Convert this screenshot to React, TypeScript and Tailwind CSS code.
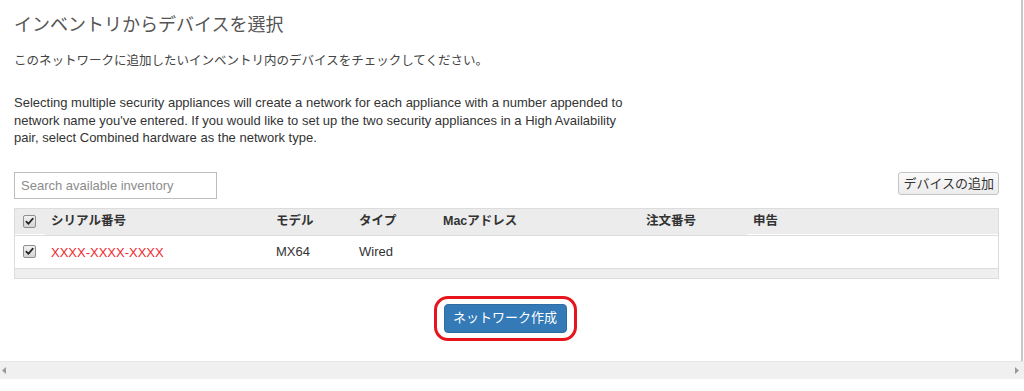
const jp = { fontFamily: '"Liberation Sans", "Noto Sans CJK JP", sans-serif' };

const Check = () => (
    <span className="inline-flex items-center justify-center w-[13px] h-[13px] rounded-[2px] border border-[#8f8f8f] bg-[linear-gradient(#f2f2f2,#d4d4d4)]">
        <svg width="9" height="9" viewBox="0 0 9 9">
            <path d="M1.3 4.6 L3.5 6.8 L7.8 1.6" stroke="#222" strokeWidth="1.7" fill="none" strokeLinecap="round" strokeLinejoin="round" />
        </svg>
    </span>
);

const cols = 'grid grid-cols-[30px_225px_83px_84px_203px_107px_1fr]';

const App = () => {
    return (
        <div className="w-[1024px] h-[391px] bg-white overflow-hidden flex flex-col" style={jp}>
            <div className="h-[361px] w-[1023px] border-r-2 border-[#c8c8c8] pl-[14px] pr-[22px] pt-[13px]">
                <h1 className="text-[18px] leading-[24px] text-[#555]">インベントリからデバイスを選択</h1>
                <p className="mt-[15px] text-[12.5px] leading-[18px] text-[#444]">
                    このネットワークに追加したいインベントリ内のデバイスをチェックしてください。
                </p>
                <p className="mt-[24px] max-w-[628px] text-[13px] leading-[17.5px] text-[#333]">
                    Selecting multiple security appliances will create a network for each appliance with a number appended to network name you've entered. If you would like to set up the two security appliances in a High Availability pair, select Combined hardware as the network type.
                </p>

                <div className="mt-[25px] flex items-start justify-between">
                    <input
                        type="text"
                        placeholder="Search available inventory"
                        className="w-[203px] h-[27px] border border-[#bdbdbd] px-[6px] text-[13px] text-[#333] placeholder:text-[#8c8c8c] outline-none"
                    />
                    <button className="h-[23px] px-[4px] rounded-[3px] border border-[#c4c4c4] bg-[linear-gradient(#fafafa,#ececec)] text-[13px] leading-[21px] text-[#333]">
                        デバイスの追加
                    </button>
                </div>

                <div className="mt-[9px] border border-[#dcdcdc] text-[12.5px] text-[#333]">
                    <div className={`${cols} h-[26px] bg-[#ececec] font-bold items-stretch`}>
                        <div className="pl-[8px] flex items-center border-b border-white"><Check /></div>
                        <div className="pl-[6px] flex items-center">シリアル番号</div>
                        <div className="pl-[6px] flex items-center">モデル</div>
                        <div className="pl-[6px] flex items-center">タイプ</div>
                        <div className="pl-[6px] flex items-center">Macアドレス</div>
                        <div className="pl-[6px] flex items-center">注文番号</div>
                        <div className="pl-[6px] flex items-center border-b border-white">申告</div>
                    </div>
                    <div className={`${cols} h-[33px] border-t border-[#dcdcdc] items-center text-[13px]`}>
                        <div className="pl-[8px] flex items-center"><Check /></div>
                        <div className="pl-[6px] pt-[2px] text-[#f0282d]">XXXX-XXXX-XXXX</div>
                        <div className="pl-[6px]">MX64</div>
                        <div className="pl-[6px]">Wired</div>
                        <div />
                        <div />
                        <div />
                    </div>
                    <div className="h-[10px] border-t border-[#dcdcdc] bg-[#efefef]" />
                </div>

                <div className="mt-[17px] flex justify-center">
                    <div className="mr-[3px] border-[3px] border-[#e8141c] rounded-[14px] px-[7px] py-[5px]">
                        <button className="w-[123px] h-[29px] rounded-[4px] bg-[#337ab7] border border-[#2e6da4] text-white text-[13px]">
                            ネットワーク作成
                        </button>
                    </div>
                </div>
            </div>

            <div className="h-[18px] bg-[#f0f0f0] border-t border-[#e6e6e6] flex items-center justify-between px-[2px]">
                <svg width="4" height="7" viewBox="0 0 4 7"><path d="M4 0 L0 3.5 L4 7 Z" fill="#9a9a9a" /></svg>
                <svg width="4" height="7" viewBox="0 0 4 7" className="mr-[3px]"><path d="M0 0 L4 3.5 L0 7 Z" fill="#9a9a9a" /></svg>
            </div>
        </div>
    );
};

export default App;
